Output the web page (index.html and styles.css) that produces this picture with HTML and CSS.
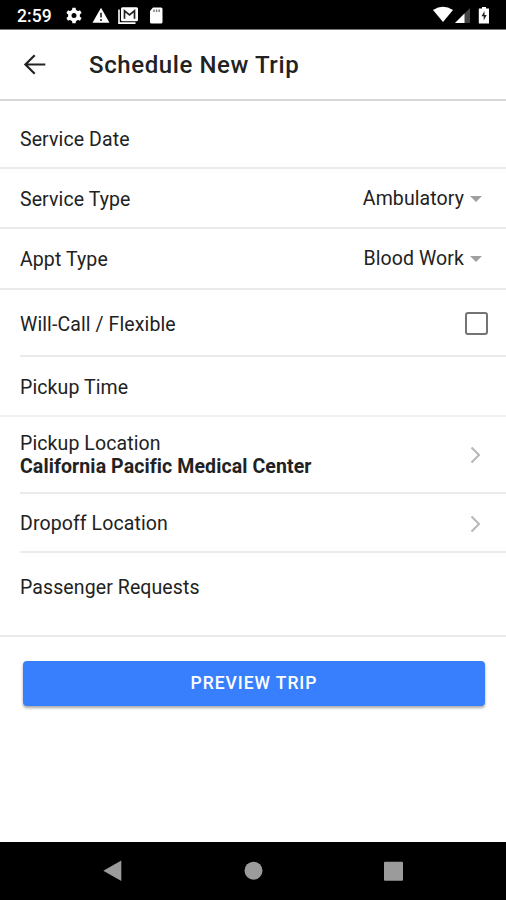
FILE: index.html
```html
<!DOCTYPE html>
<html lang="en">
<head>
<meta charset="utf-8">
<title>Schedule New Trip</title>
<link rel="stylesheet" href="styles.css">
</head>
<body>
<div class="status">
  <span class="clock">2:59</span>
  <svg class="notifications" width="98" height="20" viewBox="0 0 98 20">
    <g fill="#fff">
      <circle cx="9" cy="9.500" r="4.200" fill="none" stroke="#fff" stroke-width="3.400"/>
      <path d="M7.400 1.700h3.200l.5 3H6.900zM7.400 17.300h3.200l.5-3H6.900zM1.400 7l1.600-2.800 2.900 1.200-2.100 3.600zM16.600 7l-1.600-2.800-2.900 1.200 2.100 3.600zM1.400 12l1.600 2.800 2.900-1.200-2.100-3.600zM16.600 12l-1.600 2.800-2.900-1.200 2.100-3.600z"/>
      <path d="M36 1.700 44.500 16.700h-17z"/>
      <path d="M57.500 1.200h14A1.500 1.500 0 0 1 73 2.700v11.100a1.500 1.500 0 0 1-1.500 1.500h-14a1.500 1.500 0 0 1-1.500-1.500V2.700a1.500 1.500 0 0 1 1.500-1.500z"/>
      <path d="M88 1.500h8A1.500 1.500 0 0 1 97.500 3v13a1.500 1.500 0 0 1-1.500 1.500h-9.500A1.500 1.500 0 0 1 85 16V5z"/>
    </g>
    <path d="M36 6.800v4.700M36 13v2" stroke="#000" stroke-width="1.400"/>
    <path d="M89 3.500v2.500M91.600 3.500v2.500M94.200 3.500v2.500" stroke="#777" stroke-width="1.400"/>
    <path d="M59.500 12.800V4.800l5 4 5-4v8" fill="none" stroke="#222" stroke-width="1.700"/>
    <path d="M54 3.500v13.600h16.500" fill="none" stroke="#fff" stroke-width="1.600"/>
  </svg>
  <svg class="system" width="60" height="20" viewBox="0 0 60 20">
    <path d="M2 4Q12-2.500 22 4L12 16z" fill="#fff"/>
    <path d="M39 2v15H24z" fill="#444"/>
    <path d="M33.500 7.500V17H24z" fill="#fff"/>
    <path d="M49.500 2.500H51V1h4v1.500h3v15H47.800v-15z" fill="#fff"/>
    <path d="m53.500 5-3 5.300h2.200V14.500l3-5.400h-2.200z" fill="#222"/>
  </svg>
</div>
<header class="header">
  <svg class="back" width="24" height="24" viewBox="0 0 24 24"><path d="M22.300 11.500h-20M11.700 2.200 2.400 11.500l9.300 9.300" fill="none" stroke="#222" stroke-width="2.200"/></svg>
  <h1 class="title">Schedule New Trip</h1>
</header>
<main class="form">
  <div class="row date"><span class="label">Service Date</span></div>
  <div class="row type"><span class="label">Service Type</span><span class="value">Ambulatory</span><i class="caret"></i></div>
  <div class="row appt"><span class="label">Appt Type</span><span class="value">Blood Work</span><i class="caret"></i></div>
  <div class="row inset flexible"><span class="label">Will-Call / Flexible</span><span class="checkbox"></span></div>
  <div class="row time"><span class="label">Pickup Time</span></div>
  <div class="row inset pickup">
    <div class="label stack"><span>Pickup Location</span><strong>California Pacific Medical Center</strong></div>
    <svg class="chevron" width="11" height="18" viewBox="0 0 11 18"><path d="m1.500 1.500 7.500 7.500-7.500 7.500" fill="none" stroke="#b7b7b7" stroke-width="2"/></svg>
  </div>
  <div class="row inset dropoff">
    <span class="label">Dropoff Location</span>
    <svg class="chevron" width="11" height="18" viewBox="0 0 11 18"><path d="m1.500 1.500 7.500 7.500-7.500 7.500" fill="none" stroke="#b7b7b7" stroke-width="2"/></svg>
  </div>
  <div class="row requests"><span class="label">Passenger Requests</span></div>
  <button class="preview">PREVIEW TRIP</button>
</main>
<nav class="navbar">
  <svg width="506" height="58" viewBox="0 0 506 58" fill="#9b9b9b">
    <path d="M103.300 28.800 121.300 18.500v20.600z"/>
    <circle cx="253.500" cy="28.700" r="9"/>
    <rect x="384" y="19.700" width="19" height="19" rx="1"/>
  </svg>
</nav>
</body>
</html>
```
FILE: styles.css
```css
* { box-sizing: border-box; }
body {
  margin: 0;
  width: 506px;
  height: 900px;
  display: flex;
  flex-direction: column;
  overflow: hidden;
  background: #fff;
  color: #222;
  font-family: Roboto, sans-serif;
}
.status {
  height: 30px;
  flex: none;
  display: flex;
  padding: 6px 15px 0 17px;
  background: #000;
  border-bottom: 1px solid #777;
}
.clock {
  width: 48px;
  color: #fff;
  font-size: 17.5px;
  font-weight: 500;
  line-height: 20px;
  letter-spacing: 0.1px;
}
.system { margin-left: auto; }
.header {
  height: 71px;
  flex: none;
  display: flex;
  align-items: center;
  padding: 0 23px;
  border-bottom: 2px solid #d8d8d8;
}
.title {
  margin: 0 0 0 42px;
  font-size: 24px;
  font-weight: 500;
  line-height: 30px;
  letter-spacing: 0.6px;
}
.form { flex: 1; }
.row {
  display: flex;
  align-items: center;
  padding: 0 18px 0 20px;
  border-bottom: 2px solid #ebebeb;
  font-size: 19.5px;
  line-height: 24px;
  letter-spacing: 0.1px;
}
.inset { margin-left: 20px; padding-left: 0; }
.label { flex: 1; }
.date { height: 68px; padding-top: 11px; }
.type { height: 60px; padding-top: 4px; }
.appt { height: 61px; padding-top: 3px; }
.flexible { height: 67px; padding-top: 4px; }
.time { height: 60px; padding-top: 3px; border-bottom-color: #f0f0f0; }
.pickup { height: 77px; padding-top: 2px; padding-right: 25px; }
.dropoff { height: 59px; padding-top: 3px; padding-right: 25px; }
.requests { height: 84px; padding-bottom: 13px; }
.stack { display: flex; flex-direction: column; }
.stack strong { margin-top: -1px; font-weight: 700; }
.value { margin: -3px 6px 0 0; }
.caret {
  margin: -3px 6px 0 0;
  border: 6px solid transparent;
  border-top-color: #a0a0a0;
  border-bottom: 0;
}
.checkbox {
  width: 23px;
  height: 23px;
  margin-top: -3px;
  border: 2px solid #747474;
  border-radius: 3px;
}
.chevron { margin-top: -1px; }
.preview {
  display: block;
  width: 462px;
  height: 45px;
  margin: 24px 0 0 23px;
  padding: 0 0 2px;
  border: 0;
  border-radius: 4px;
  background: #387ffd;
  box-shadow: 0 2px 3px rgba(0, 0, 0, 0.35);
  color: #fff;
  font: 500 17.5px/24px Roboto, sans-serif;
  letter-spacing: 0.95px;
}
.navbar {
  height: 58px;
  flex: none;
  background: #000;
}
.navbar svg { display: block; }
```
